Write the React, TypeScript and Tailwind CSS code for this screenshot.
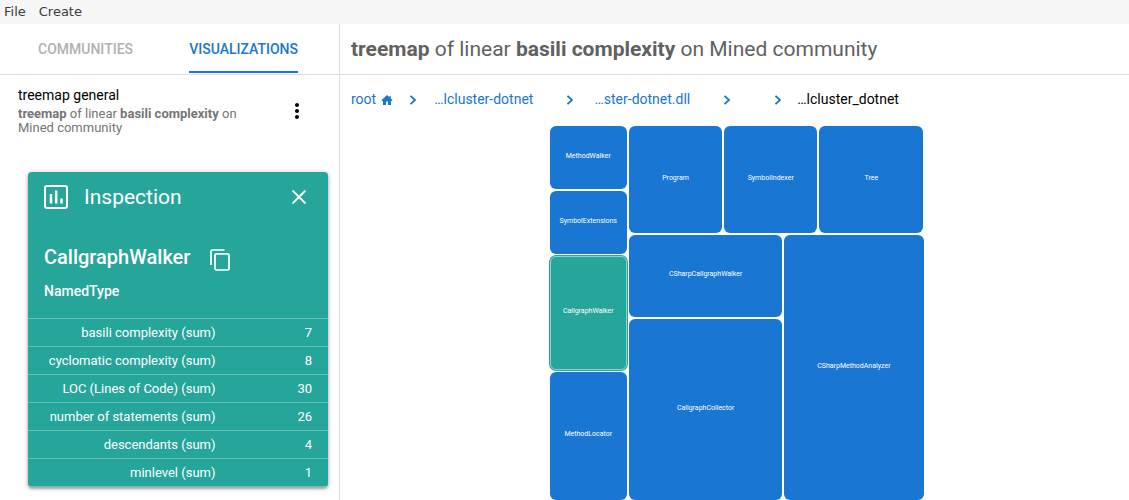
import { MdMoreVert } from "react-icons/md";

const metrics: [string, number][] = [
  ["basili complexity (sum)", 7],
  ["cyclomatic complexity (sum)", 8],
  ["LOC (Lines of Code) (sum)", 30],
  ["number of statements (sum)", 26],
  ["descendants (sum)", 4],
  ["minlevel (sum)", 1],
];

function ChartIcon() {
  return (
    <svg className="h-6 w-6" viewBox="0 0 24 24" fill="none" stroke="currentColor" strokeWidth="2" aria-hidden="true">
      <rect x="1" y="1" width="22" height="22" rx="2" />
      <path d="M7 9v9.500M12.200 5.500v13M17.500 13.500v5" strokeWidth="2.500" />
    </svg>
  );
}

function CloseIcon() {
  return (
    <svg className="h-4 w-4" viewBox="0 0 16 16" fill="none" stroke="currentColor" strokeWidth="1.800" aria-hidden="true">
      <path d="M1.500 1.500l13 13M14.500 1.500l-13 13" />
    </svg>
  );
}

function CopyIcon() {
  return (
    <svg className="h-[22px] w-5" viewBox="0 0 20 22" fill="none" stroke="currentColor" strokeWidth="1.700" aria-hidden="true">
      <path d="M1 16V2.500Q1 1 2.500 1H14.500" />
      <rect x="5" y="4.800" width="14" height="16.200" rx="1.200" />
    </svg>
  );
}

function HomeIcon() {
  return (
    <svg className="mt-0.5 h-3 w-3" viewBox="0 0 12 12" fill="currentColor" aria-hidden="true">
      <path d="M6 1L0.500 6.200l.7.800h.8V11h3V7.500h2V11h3V7h.8l.7-.8L9.800 4.500V2H8.500v1.300z" />
    </svg>
  );
}

function Chevron() {
  return (
    <svg className="mt-0.5 h-2.5 w-2" viewBox="0 0 8 10" fill="none" stroke="currentColor" strokeWidth="1.800" aria-hidden="true">
      <path d="M1.500 .8l4.500 4.200-4.500 4.200" />
    </svg>
  );
}

function Cell({ name, size, selected = false }: { name: string; size: string; selected?: boolean }) {
  return (
    <button
      type="button"
      aria-pressed={selected}
      className={`${size} flex min-h-0 min-w-0 items-center justify-center rounded-md text-[7px] leading-none text-white ${
        selected ? "bg-[#26a69a] ring-1 ring-[#26a69a] outline-1 -outline-offset-1 outline-white/50" : "bg-[#1976d2]"
      }`}
    >
      <span className="pb-0.5">{name}</span>
    </button>
  );
}

function Treemap() {
  return (
    <div className="flex aspect-square w-[374px] gap-0.5">
      <div className="flex flex-[155] flex-col gap-0.5">
        <Cell name="MethodWalker" size="flex-[126]" />
        <Cell name="SymbolExtensions" size="flex-[126]" />
        <Cell name="CallgraphWalker" size="flex-[227]" selected />
        <Cell name="MethodLocator" size="flex-[257]" />
      </div>
      <div className="flex flex-[589] flex-col gap-0.5">
        <div className="flex flex-[107] gap-0.5">
          <Cell name="Program" size="flex-[93]" />
          <Cell name="SymbolIndexer" size="flex-[93]" />
          <Cell name="Tree" size="flex-[104]" />
        </div>
        <div className="flex flex-[264] gap-0.5">
          <div className="flex flex-[153] flex-col gap-0.5">
            <Cell name="CSharpCallgraphWalker" size="flex-[81]" />
            <Cell name="CallgraphCollector" size="flex-[181]" />
          </div>
          <Cell name="CSharpMethodAnalyzer" size="flex-[139]" />
        </div>
      </div>
    </div>
  );
}

function Inspection() {
  return (
    <section className="mt-[37px] mr-[11px] ml-7 rounded-sm bg-[#26a69a] text-white shadow-[0_1px_5px_rgba(0,0,0,0.3),0_2px_2px_rgba(0,0,0,0.2)]">
      <header className="flex h-[50px] items-center pr-[21px] pl-4">
        <ChartIcon />
        <h2 className="ml-4 flex-1 text-[21px] leading-6">Inspection</h2>
        <button type="button" aria-label="Close">
          <CloseIcon />
        </button>
      </header>
      <div className="h-24 px-4 pt-[21px]">
        <div className="flex items-end gap-5">
          <h3 className="text-xl leading-7 font-medium">CallgraphWalker</h3>
          <button type="button" aria-label="Copy name">
            <CopyIcon />
          </button>
        </div>
        <p className="mt-2.5 text-sm leading-5 font-medium">NamedType</p>
      </div>
      <table className="w-full text-[13px] leading-[27px]">
        <tbody>
          {metrics.map(([label, value]) => (
            <tr key={label} className="border-t border-white/30 last:border-b">
              <th scope="row" className="w-5/8 text-right font-normal">{label}</th>
              <td className="pr-4 text-right">{value}</td>
            </tr>
          ))}
        </tbody>
      </table>
    </section>
  );
}

export default function App() {
  return (
    <div className="flex min-h-screen flex-col bg-white font-['Roboto',sans-serif] text-black">
      <nav className="flex h-6 gap-[13px] bg-[#f6f6f6] pl-1 font-['DejaVu_Sans',sans-serif] text-[13px] leading-6 text-[#3c3c3c]">
        <button type="button">File</button>
        <button type="button">Create</button>
      </nav>
      <div className="flex flex-1">
        <aside className="w-[340px] shrink-0 border-r border-[#dcdcdc]">
          <div role="tablist" className="flex h-[51px] justify-between border-b border-[#dcdcdc] pr-[41px] pl-[38px] text-sm font-medium">
            <button type="button" role="tab" aria-selected="false" className="h-[49px] border-b-2 border-transparent pt-0.5 text-[#b0b0b0]">
              COMMUNITIES
            </button>
            <button type="button" role="tab" aria-selected="true" className="h-[49px] border-b-2 border-[#1976d2] pt-0.5 text-[#1976d2]">
              VISUALIZATIONS
            </button>
          </div>
          <div className="flex items-start pt-3 pr-[30px] pl-[18px]">
            <div className="flex-1">
              <h2 className="text-sm leading-4">treemap general</h2>
              <p className="mt-1 w-[230px] text-[13px] leading-[14px] text-[#757575]">
                <b>treemap</b> of linear <b>basili complexity</b> on Mined community
              </p>
            </div>
            <button type="button" aria-label="More options" className="mt-3">
              <MdMoreVert className="h-6 w-6" />
            </button>
          </div>
          <Inspection />
        </aside>
        <main className="min-w-0 flex-1">
          <h1 className="flex h-[51px] items-center border-b border-[#dcdcdc] pt-0.5 pl-[11px] text-[21px] text-[#616161]">
            <span>
              <b>treemap</b> of linear <b>basili complexity</b> on Mined community
            </span>
          </h1>
          <nav aria-label="Breadcrumb" className="flex h-[51px] items-center pb-[3px] pl-[11px] text-sm text-[#1976d2]">
            <a href="#root" className="flex items-center gap-[5px]">
              root <HomeIcon />
            </a>
            <span className="ml-4"><Chevron /></span>
            <a href="#project" className="ml-[17px]">…lcluster-dotnet</a>
            <span className="ml-[33px]"><Chevron /></span>
            <a href="#assembly" className="ml-5">…ster-dotnet.dll</a>
            <span className="ml-[33px]"><Chevron /></span>
            <span className="ml-[43px]"><Chevron /></span>
            <span className="ml-[15px] text-black">…lcluster_dotnet</span>
          </nav>
          <div className="flex justify-center pl-1">
            <Treemap />
          </div>
        </main>
      </div>
    </div>
  );
}
